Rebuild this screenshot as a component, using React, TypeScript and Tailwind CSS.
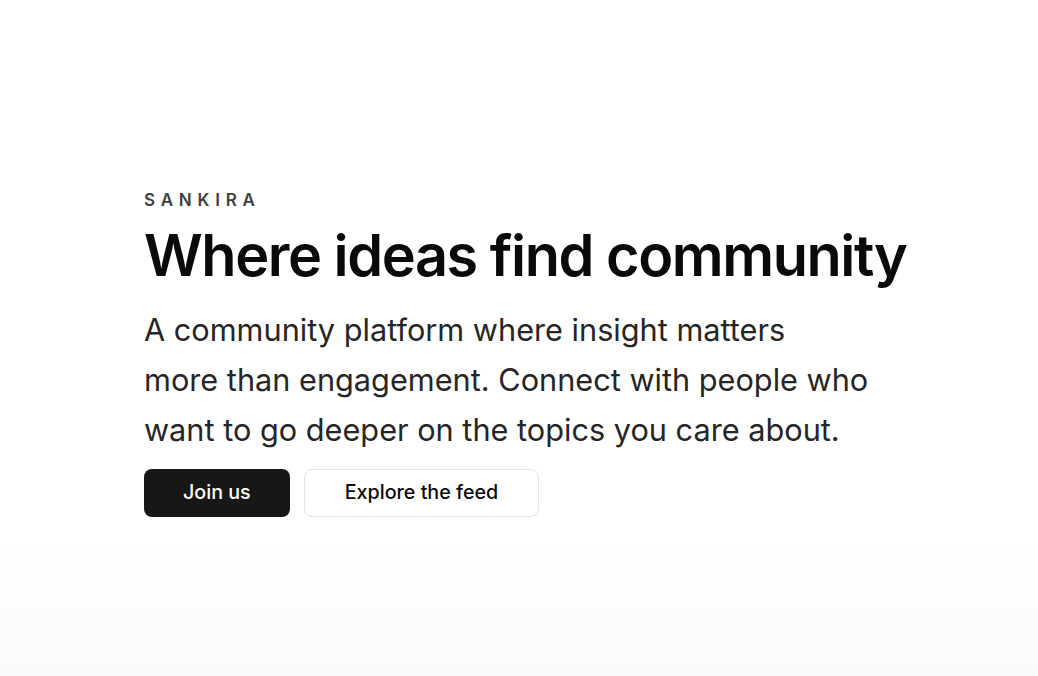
export default function App() {
  return (
    <div
      className="min-h-screen w-full bg-gradient-to-b from-white from-80% to-[#fafafa]"
      style={{ fontFamily: "Inter, 'Noto Sans', sans-serif" }}
    >
      <main className="px-[144px] pt-[190px] pb-20">
        <div className="text-[17px] font-semibold tracking-[0.34em] text-[#3f3f3f] leading-5">
          SANKIRA
        </div>

        <h1 className="mt-[11px] text-[57.6px] font-semibold tracking-[-0.025em] leading-[68px] text-[#0a0a0a] whitespace-nowrap">
          Where ideas find community
        </h1>

        <p className="mt-[16px] text-[30.7px] leading-[50px] text-[#262626]">
          A community platform where insight matters
          <br />
          more than engagement. Connect with people who
          <br />
          want to go deeper on the topics you care about.
        </p>

        <div className="mt-[14px] flex gap-[14px]">
          <button className="h-12 px-[39px] rounded-lg bg-[#171717] text-white text-[19.7px] font-medium">
            Join us
          </button>
          <button className="h-12 px-10 rounded-lg border border-[#e5e5e5] bg-white text-[#0a0a0a] text-[19.7px] font-medium">
            Explore the feed
          </button>
        </div>
      </main>
    </div>
  )
}
